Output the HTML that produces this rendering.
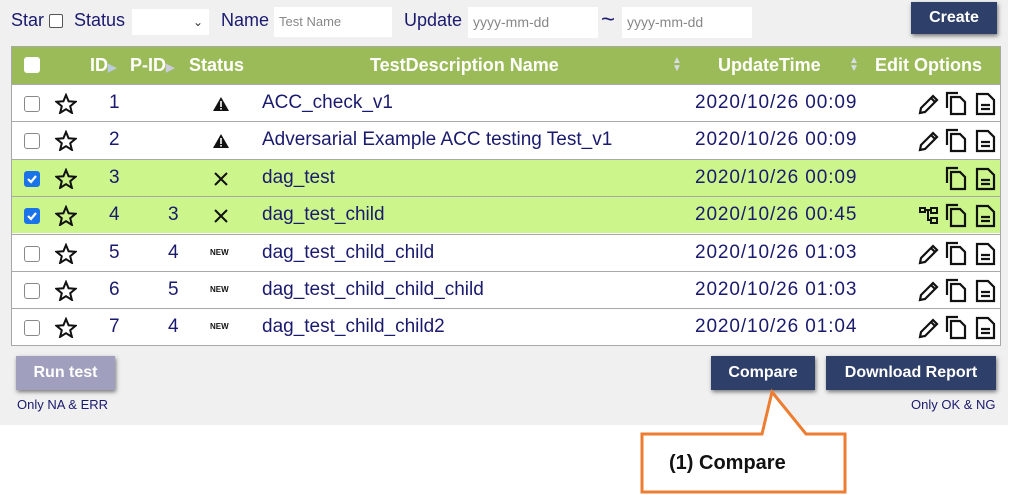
<!DOCTYPE html><html><head><meta charset="utf-8"><style>
*{box-sizing:border-box;margin:0;padding:0}
body{width:1021px;height:495px;background:#fff;font-family:"Liberation Sans",sans-serif;position:relative;overflow:hidden;color:#1a1a6e}
.a{position:absolute;white-space:nowrap}
#panel{position:absolute;left:0;top:0;width:1008px;height:425px;background:#f0f0f0}
.lbl{font-size:18px;color:#1a1a6e;top:10px}
.inp{position:absolute;background:#fff;font-size:13px;color:#888;padding-left:5px;line-height:30px}
.btn{position:absolute;background:#2e3f6a;color:#fff;font-weight:bold;font-size:16px;text-align:center;box-shadow:1px 2px 4px rgba(0,0,0,.5)}
#tbl{position:absolute;left:11px;top:46px;width:990px;height:300px;border:1px solid #a8a8a8;background:#fff}
.hdr{position:absolute;left:0;top:0;width:988px;height:37px;background:#9bbb59}
.h{position:absolute;color:#fff;font-weight:bold;font-size:18px;top:8px}
.row{position:absolute;left:0;width:988px;height:37px;border-top:1px solid #a8a8a8;font-size:19px}
.row .a{top:7px}
.cb{position:absolute;left:12px;top:11px;width:16px;height:16px;border:1px solid #888;border-radius:3px;background:#fff}
.cbk{background:#1a73e8;border-color:#1a73e8}
.g{background:#ccf58c}
.dt{letter-spacing:0.9px}
</style></head><body>
<div id="panel"></div>
<div class="a lbl" style="left:11px">Star</div>
<div class="a" style="left:49px;top:14px;width:14px;height:14px;border:1px solid #555;border-radius:2px;background:#fff"></div>
<div class="a lbl" style="left:74px">Status</div>
<div class="inp" style="left:132px;top:9px;width:77px;height:26px"><span style="position:absolute;right:6px;top:-2px;color:#333;font-size:12px">&#8964;</span></div>
<div class="a lbl" style="left:221px">Name</div>
<div class="inp" style="left:274px;top:7px;width:118px;height:30px">Test Name</div>
<div class="a lbl" style="left:404px">Update</div>
<div class="inp" style="left:468px;top:7px;width:130px;height:31px;font-size:14px">yyyy-mm-dd</div>
<div class="a" style="left:601px;top:6px;font-size:24px;color:#1a1a6e">~</div>
<div class="inp" style="left:622px;top:7px;width:130px;height:31px;font-size:14px">yyyy-mm-dd</div>
<div class="btn" style="left:911px;top:2px;width:86px;height:32px;line-height:32px">Create</div>

<div id="tbl">
<div class="hdr">
<div class="cb" style="top:10px;border-color:#fff"></div>
<div class="h" style="left:78px">ID<span style="color:#bcd;font-size:11px">&#9654;</span></div>
<div class="h" style="left:118px">P-ID<span style="color:#ccd;font-size:11px">&#9654;</span></div>
<div class="h" style="left:177px">Status</div>
<div class="h" style="left:358px">TestDescription Name</div>
<div class="h" style="left:706px">UpdateTime</div>
<div class="h" style="left:863px">Edit Options</div>
<div class="a" style="left:660px;top:10px;color:#d6dde6;font-size:10px;line-height:8px">&#9650;<br>&#9660;</div>
<div class="a" style="left:837px;top:10px;color:#d6dde6;font-size:10px;line-height:8px">&#9650;<br>&#9660;</div>
</div>
<div id="rows"></div>
</div>

<div class="btn" style="left:16px;top:356px;width:99px;height:34px;line-height:34px;background:#a09fbe">Run test</div>
<div class="a" style="left:17px;top:397px;font-size:13px">Only NA &amp; ERR</div>
<div class="btn" style="left:711px;top:356px;width:104px;height:34px;line-height:34px">Compare</div>
<div class="btn" style="left:826px;top:356px;width:170px;height:34px;line-height:34px">Download Report</div>
<div class="a" style="left:911px;top:397px;font-size:13px">Only OK &amp; NG</div>

<svg class="a" style="left:0;top:0" width="1021" height="495">
<path d="M642,434 H762 L772,392 L806,434 H845 V492 H642 Z" fill="#fff" stroke="#ed7d31" stroke-width="3"/>
<text x="669" y="469" font-family="Liberation Sans" font-weight="bold" font-size="20" fill="#111">(1) Compare</text>
</svg>

<script>
const rows=[
[1,'','w','ACC_check_v1','2020/10/26 00:09',0,1],
[2,'','w','Adversarial Example ACC testing Test_v1','2020/10/26 00:09',0,1],
[3,'','x','dag_test','2020/10/26 00:09',1,0],
[4,3,'x','dag_test_child','2020/10/26 00:45',1,2],
[5,4,'n','dag_test_child_child','2020/10/26 01:03',0,1],
[6,5,'n','dag_test_child_child_child','2020/10/26 01:03',0,1],
[7,4,'n','dag_test_child_child2','2020/10/26 01:04',0,1]];
const ys=[37,74,112,149,187,224,261];
const pencil='<path d="M2,20 L3,15 L15,3 L19,7 L7,19 Z M13,5 L17,9" fill="none" stroke="#111" stroke-width="2.2"/>';
const tree='<g fill="none" stroke="#111" stroke-width="2"><rect x="1" y="3" width="5" height="4"/><rect x="12" y="3" width="6" height="5"/><rect x="12" y="13" width="6" height="5"/><path d="M6,5 H12 M9,5 V15 H12"/></g>';
const copy='<g fill="none" stroke="#111" stroke-width="2.2"><path d="M2,17 V2 H13"/><path d="M6,6 H15 L20,11 V23 H6 Z"/></g>';
const doc='<g fill="none" stroke="#111" stroke-width="2.2"><path d="M2,2 H13 L19,8 V22 H2 Z"/><path d="M6,13 H15 M6,17 H15"/></g>';
let h='';
rows.forEach((r,i)=>{
 const g=r[5];
 let st=r[2]=='w'?'<svg class="a" style="left:200px;top:11px" width="18" height="16"><path d="M9,1 L17,15 H1 Z" fill="#111"/><rect x="8.2" y="5" width="1.6" height="6" fill="#fff"/><rect x="8.2" y="12" width="1.6" height="1.6" fill="#fff"/></svg>':
 r[2]=='x'?'<svg class="a" style="left:201px;top:11px" width="16" height="16"><path d="M2,2 L14,14 M14,2 L2,14" stroke="#111" stroke-width="2"/></svg>':
 '<div class="a" style="left:198px;top:13px!important;font-size:8px;font-weight:bold;color:#111">NEW</div>';
 let op='';
 if(r[6]==1)op+='<svg class="a" style="left:906px;top:8px" width="22" height="22">'+pencil+'</svg>';
 if(r[6]==2)op+='<svg class="a" style="left:907px;top:8px" width="20" height="22">'+tree+'</svg>';
 op+='<svg class="a" style="left:933px;top:6px" width="22" height="25">'+copy+'</svg><svg class="a" style="left:963px;top:7px" width="21" height="24">'+doc+'</svg>';
 h+=`<div class="row ${g?'g':''}" style="top:${ys[i]}px">
 <div class="cb ${g?'cbk':''}">${g?'<svg width="14" height="14" style="position:absolute;left:0;top:0"><path d="M3,7 L6,10 L11,4" stroke="#fff" stroke-width="2.2" fill="none"/></svg>':''}</div>
 <svg class="a" style="left:43px;top:8px" width="22" height="21"><path d="M11,2 L13.6,8.3 L20.5,8.8 L15.2,13.2 L16.9,19.9 L11,16.2 L5.1,19.9 L6.8,13.2 L1.5,8.8 L8.4,8.3 Z" fill="none" stroke="#111" stroke-width="2"/></svg>
 <div class="a" style="left:97px">${r[0]}</div><div class="a" style="left:156px">${r[1]}</div>${st}
 <div class="a" style="left:250px">${r[3]}</div><div class="a dt" style="left:683px">${r[4]}</div>${op}</div>`;
});
document.getElementById('rows').innerHTML=h;
</script>
</body></html>
